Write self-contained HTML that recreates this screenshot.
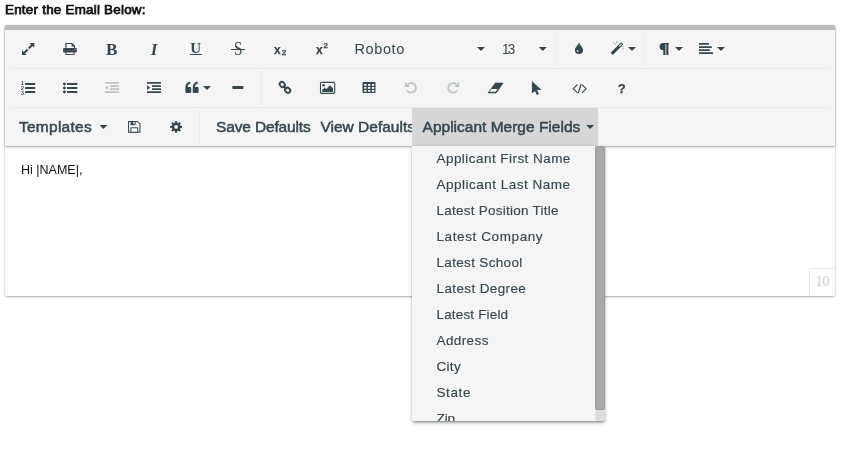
<!DOCTYPE html>
<html><head><meta charset="utf-8"><title>Email editor</title>
<style>
*{box-sizing:border-box}
html,body{margin:0;padding:0;background:#fff;width:841px;height:450px;overflow:hidden}
body{font-family:"Liberation Sans",sans-serif;color:#37474f;position:relative}
.lbl{position:absolute;left:5px;top:1px;font-size:13.4px;color:#111;line-height:17px;white-space:nowrap;letter-spacing:.24px;-webkit-text-stroke:.75px #111}
.box{position:absolute;left:5px;top:25px;width:830px;height:271px;background:#fff;box-shadow:0 1px 3px rgba(0,0,0,.12),0 1px 2px rgba(0,0,0,.24);border-radius:2px}
.tb{position:absolute;left:0;top:0;width:830px;height:121px;background:#f5f5f5;border-top:5px solid #bdbdbd;border-radius:2px 2px 0 0;box-shadow:0 1px 3px rgba(0,0,0,.12),0 1px 2px rgba(0,0,0,.24)}
.hs{position:absolute;left:4px;width:822px;height:1px;background:#ebebeb}
.vs{position:absolute;width:1px;height:34px;background:#ebebeb}
.t{position:absolute;white-space:nowrap;color:#37474f}
.m{font-size:15.5px;line-height:18px;-webkit-text-stroke:.5px #37474f}
.content{position:absolute;left:0;top:121px;width:830px;height:150px;background:#fff;border-radius:0 0 2px 2px}
.cnt{position:absolute;right:0;bottom:0;width:26px;height:28px;border-left:1px solid #ebebeb;border-top:1px solid #ebebeb;font-family:"Liberation Serif",serif;font-size:14px;color:#ccc;text-align:center;line-height:26px}
.dd{position:absolute;left:412px;top:146px;width:193px;height:275px;background:#f5f5f5;overflow:hidden;box-shadow:0 2px 4px rgba(0,0,0,.2),0 1px 2px rgba(0,0,0,.22),0 3px 3px -2px rgba(0,0,0,.22);border-radius:0 0 1px 1px}
.dd div.i{position:absolute;left:24.5px;font-size:13.5px;line-height:26px;height:26px;color:#37474f;-webkit-text-stroke:.15px #37474f;white-space:nowrap}
.sb{position:absolute;right:0;top:0;width:10px;height:275px;background:#dedede;border-left:1px solid #e6e6e6}
.sb b{position:absolute;left:-1px;top:0;width:10px;height:263.5px;background:#a8a8a8;border:1px solid #9c9c9c;border-radius:2px;display:block}
.icons{position:absolute;left:0;top:0;pointer-events:none}
.g{position:absolute;white-space:nowrap;color:#37474f;line-height:1}
.sf{font-family:"Liberation Serif",serif}
#w{position:absolute;left:0;top:0;width:841px;height:450px;will-change:transform}
</style></head><body><div id="w">
<div class="lbl" id="lbl">Enter the Email Below:</div>
<div class="box">
 <div class="content">
  <div class="t" id="hi" style="left:16px;top:17px;font-size:12.5px;color:#111;line-height:15px">Hi |NAME|,</div>
  <div class="cnt">10</div>
 </div>
 <div class="tb">
  <div class="hs" style="top:38px"></div>
  <div class="hs" style="top:77px"></div>
  <div class="t" id="roboto" style="left:349.5px;top:11px;font-size:14.5px;line-height:17px;letter-spacing:.6px">Roboto</div>
  <div class="t" id="n13" style="left:497.3px;top:11px;font-size:14.5px;line-height:17px;letter-spacing:-2px;transform:scaleX(.93);transform-origin:0 0">13</div>
  <div class="vs" style="left:550px;top:2px"></div>
  <div class="vs" style="left:639px;top:2px"></div>
  <div class="vs" style="left:256px;top:41px"></div>
  <div class="vs" style="left:194px;top:80px"></div>
  <div class="t m" id="tpl" style="left:14px;top:88px;letter-spacing:.25px">Templates</div>
  <div class="t m" id="sd" style="left:211px;top:88px;letter-spacing:-.15px">Save Defaults</div>
  <div class="t m" id="vd" style="left:315.5px;top:88px;letter-spacing:0px">View Defaults</div>
  <div style="position:absolute;left:407px;top:78px;width:186px;height:38px;background:#d6d6d6"></div>
  <div class="t m" id="amf" style="left:417.6px;top:88px;letter-spacing:0px">Applicant Merge Fields</div>
 </div>
</div>
<div class="g sf" id="gB" style="left:106px;top:41.3px;font-size:17.2px;font-weight:bold">B</div>
<div class="g sf" id="gI" style="left:150.7px;top:41.3px;font-size:17.2px;font-weight:bold;font-style:italic">I</div>
<div class="g sf" id="gU" style="left:190.3px;top:40.5px;font-size:15px;font-weight:bold">U</div>
<div style="position:absolute;left:190px;top:54px;width:12px;height:1.1px;background:#37474f"></div>
<div class="g sf" id="gS" style="left:233.6px;top:41.1px;font-size:17.8px;transform:scaleX(.85);transform-origin:0 0">S</div>
<div style="position:absolute;left:231.4px;top:48.9px;width:13.9px;height:1.1px;background:#37474f"></div>
<div class="g" id="gx1" style="left:273.6px;top:42.5px;font-size:13.5px;transform:scaleX(.88);transform-origin:0 0;font-weight:bold;-webkit-text-stroke:.25px #37474f">x</div>
<div class="g" id="g21" style="left:281.8px;top:49.3px;font-size:8px;font-weight:bold;-webkit-text-stroke:.25px #37474f">2</div>
<div class="g" id="gx2" style="left:315.8px;top:42.5px;font-size:13.5px;transform:scaleX(.88);transform-origin:0 0;font-weight:bold;-webkit-text-stroke:.25px #37474f">x</div>
<div class="g" id="g22" style="left:323.6px;top:42.4px;font-size:8px;font-weight:bold;-webkit-text-stroke:.25px #37474f">2</div>
<div class="g" id="gq" style="left:617.8px;top:81.5px;font-size:13px;font-weight:bold;-webkit-text-stroke:.25px #37474f">?</div>
<div class="dd">
<div class="i" id="it0" style="top:0px;letter-spacing:0.45px">Applicant First Name</div>
<div class="i" id="it1" style="top:26px;letter-spacing:0.49px">Applicant Last Name</div>
<div class="i" id="it2" style="top:52px;letter-spacing:0.25px">Latest Position Title</div>
<div class="i" id="it3" style="top:78px;letter-spacing:0.6px">Latest Company</div>
<div class="i" id="it4" style="top:104px;letter-spacing:0.33px">Latest School</div>
<div class="i" id="it5" style="top:130px;letter-spacing:0.38px">Latest Degree</div>
<div class="i" id="it6" style="top:156px;letter-spacing:0.16px">Latest Field</div>
<div class="i" id="it7" style="top:182px;letter-spacing:0.4px">Address</div>
<div class="i" id="it8" style="top:208px;letter-spacing:0.3px">City</div>
<div class="i" id="it9" style="top:234px;letter-spacing:0.6px">State</div>
<div class="i" id="it10" style="top:260px;letter-spacing:-0.1px">Zip</div>
 <div class="sb"><b></b></div>
</div>
<svg class="icons" width="841" height="450" viewBox="0 0 841 450" fill="#37474f"><path d="M22 55.1V50.3L23.7 52L26.9 48.8L28.3 50.2L25.1 53.4L26.8 55.1Z M34.3 42.9V47.7L32.6 46L29.4 49.2L28 47.8L31.2 44.6L29.5 42.9Z"/>
<path d="M65.9 48.5V43.5H71.8L74.5 46.2V48.5" fill="#fbfbfb" stroke="#37474f" stroke-width="1.15"/><path d="M71.8 43.5V46.2H74.5Z" stroke="#37474f" stroke-width=".6"/><rect x="63.1" y="47.95" width="13.7" height="4.5" rx="1"/><rect x="63.5" y="50.2" width="12.9" height=".5" fill="#4a5a62"/><circle cx="74.9" cy="49.4" r=".55" fill="#b9c0c4"/><rect x="65.9" y="52" width="8.1" height="2.45" fill="#ffffff" stroke="#37474f" stroke-width="1"/>
<path d="M579 42.4C580.4 45.6 583.1 47.4 583.1 50A4.1 4.1 0 0 1 574.9 50C574.9 47.4 577.6 45.6 579 42.4Z"/><rect x="576.9" y="50" width="1.5" height="1.7" rx=".5" fill="#e8eaeb"/>
<path d="M611.7 53.9L622.2 43.4" stroke="#37474f" stroke-width="3" fill="none"/><path d="M619.3 46.3L621.5 44.1" stroke="#eceeee" stroke-width="1.1" fill="none"/><g fill="#37474f" opacity=".55"><rect x="613" y="42.2" width="1" height="1"/><rect x="616.2" y="41.8" width="1" height="1.4"/><rect x="614.6" y="43.6" width="1.2" height="1"/><rect x="622.6" y="46" width="1" height="1"/><rect x="622.4" y="48.2" width="1.2" height="1"/></g>
<path d="M663.2 42.9H669V44.3H668.4V54.9H666.3V44.3H665.5V54.9H663.3V50.2H663.2A3.65 3.65 0 0 1 663.2 42.9Z"/>
<rect x="699.00" y="43.05" width="10.00" height="1.75" rx=".3"/><rect x="699.00" y="46.20" width="12.80" height="1.75" rx=".3"/><rect x="699.00" y="49.25" width="10.80" height="1.75" rx=".3"/><rect x="699.00" y="52.30" width="14.00" height="1.75" rx=".3"/>
<rect x="25.00" y="83.10" width="10.20" height="1.80" rx=".3"/><rect x="25.00" y="87.10" width="10.20" height="1.80" rx=".3"/><rect x="25.00" y="91.10" width="10.20" height="1.80" rx=".3"/>
<g font-family="Liberation Sans,sans-serif" font-weight="bold" font-size="5.2px"><text x="21" y="84.9">1</text><text x="21" y="89.6">2</text><text x="21" y="94.6">3</text></g>
<rect x="66.90" y="83.10" width="10.40" height="1.80" rx=".3"/><rect x="66.90" y="87.10" width="10.40" height="1.80" rx=".3"/><rect x="66.90" y="91.10" width="10.40" height="1.80" rx=".3"/>
<circle cx="64.4" cy="84" r="1.45"/><circle cx="64.4" cy="88" r="1.45"/><circle cx="64.4" cy="92" r="1.45"/>
<g fill="#bcc3c6"><rect x="105.00" y="82.05" width="14.00" height="1.75" rx=".3"/><rect x="105.00" y="91.25" width="14.00" height="1.75" rx=".3"/><rect x="110.00" y="85.15" width="9.00" height="1.75" rx=".3"/><rect x="110.00" y="88.20" width="9.00" height="1.75" rx=".3"/><path d="M107.9 85.4V89.9L105 87.65Z"/></g>
<rect x="147.00" y="82.05" width="14.00" height="1.75" rx=".3"/><rect x="147.00" y="91.25" width="14.00" height="1.75" rx=".3"/><rect x="152.00" y="85.15" width="9.00" height="1.75" rx=".3"/><rect x="152.00" y="88.20" width="9.00" height="1.75" rx=".3"/><path d="M147.1 85.3V90L150.3 87.65Z"/>
<path d="M185.40 92.2V88C185.35 84.2 187.30 81.9 190.30 81.85L190.30 83.75C188.70 83.85 187.65 85.1 187.60 87.1H190.40a.8 .8 0 0 1 .8 .8V92.2a.8 .8 0 0 1 -.8 .8H186.20a.8 .8 0 0 1 -.8 -.8Z M192.80 92.2V88C192.75 84.2 194.70 81.9 197.70 81.85L197.70 83.75C196.10 83.85 195.05 85.1 195.00 87.1H197.80a.8 .8 0 0 1 .8 .8V92.2a.8 .8 0 0 1 -.8 .8H193.60a.8 .8 0 0 1 -.8 -.8Z"/>
<rect x="232.3" y="85.9" width="11.2" height="3.1" rx="1"/>
<g fill="none" stroke="#37474f" stroke-width="1.85"><rect x="-2.8" y="-2.3" width="5.6" height="4.6" rx="2.3" transform="translate(282.3 84.5) rotate(47)"/><rect x="-2.8" y="-2.3" width="5.6" height="4.6" rx="2.3" transform="translate(287.65 90.2) rotate(47)"/><path d="M283.4 85.7L286.6 89.1"/></g>
<rect x="320.5" y="82.35" width="14.2" height="11" rx="1" fill="none" stroke="#37474f" stroke-width="1.1"/><circle cx="323.6" cy="85.2" r="1.3"/><path d="M322.2 92V90L324.6 87.7L326.2 89.2L330 85.2L333 88.4V92Z"/>
<rect x="362.5" y="81.9" width="13" height="11" rx="1"/><rect x="364.05" y="84.10" width="2.5" height="1.6" rx=".5" fill="#fbfbfb"/><rect x="364.05" y="87.10" width="2.5" height="1.6" rx=".5" fill="#fbfbfb"/><rect x="364.05" y="90.10" width="2.5" height="1.6" rx=".5" fill="#fbfbfb"/><rect x="367.90" y="84.10" width="2.5" height="1.6" rx=".5" fill="#fbfbfb"/><rect x="367.90" y="87.10" width="2.5" height="1.6" rx=".5" fill="#fbfbfb"/><rect x="367.90" y="90.10" width="2.5" height="1.6" rx=".5" fill="#fbfbfb"/><rect x="371.75" y="84.10" width="2.5" height="1.6" rx=".5" fill="#fbfbfb"/><rect x="371.75" y="87.10" width="2.5" height="1.6" rx=".5" fill="#fbfbfb"/><rect x="371.75" y="90.10" width="2.5" height="1.6" rx=".5" fill="#fbfbfb"/>
<g fill="#bcc3c6"><path d="M407.81 84.51A4.80 4.80 0 1 1 407.04 90.30" fill="none" stroke="#bcc3c6" stroke-width="1.8"/><path d="M405 81.9V87H410.1Z"/></g>
<g fill="#bcc3c6"><path d="M456.39 84.51A4.80 4.80 0 1 0 457.16 90.30" fill="none" stroke="#bcc3c6" stroke-width="1.8"/><path d="M459.2 81.9V87H454.1Z"/></g>
<path d="M495.2 82.9H503.2L496.3 93H488Z" stroke="#37474f" stroke-width=".5" stroke-linejoin="round"/><path d="M489.6 91.7L491.5 88.9H497.4L495.5 91.7Z" fill="#fff"/>
<path d="M531.9 81V93.6L534.9 90.9L536.9 95L539 94L537 90.1H541.4Z"/>
<g fill="none" stroke="#37474f" stroke-width="1.15"><path d="M577.4 84.6L573.3 88.7L577.4 92.8"/><path d="M581.2 84.2L578.2 93.2"/><path d="M582 84.6L586.1 88.7L582 92.8"/></g>
<path d="M128.6 121.4H137.5L140 123.9V132.3H128.6Z" fill="none" stroke="#37474f" stroke-width="1.05"/><rect x="130.6" y="121.3" width="5" height="3.9"/><rect x="133.3" y="122" width="1.3" height="2.2" fill="#f5f5f5"/><rect x="130.9" y="127.8" width="6.8" height="4.4" fill="#fff" stroke="#37474f" stroke-width="1"/>
<path fill-rule="evenodd" d="M180.37 125.85 L182.01 125.88 L182.01 127.92 L180.37 127.95 L179.86 129.18 L181.00 130.36 L179.56 131.80 L178.38 130.66 L177.15 131.17 L177.12 132.81 L175.08 132.81 L175.05 131.17 L173.82 130.66 L172.64 131.80 L171.20 130.36 L172.34 129.18 L171.83 127.95 L170.19 127.92 L170.19 125.88 L171.83 125.85 L172.34 124.62 L171.20 123.44 L172.64 122.00 L173.82 123.14 L175.05 122.63 L175.08 120.99 L177.12 120.99 L177.15 122.63 L178.38 123.14 L179.56 122.00 L181.00 123.44 L179.86 124.62Z M174.20 126.90 a1.90 1.90 0 1 0 3.80 0 a1.90 1.90 0 1 0 -3.80 0Z"/><path d="M477.0 47.0h8l-4 4.1z"/><path d="M538.8 47.0h8l-4 4.1z"/><path d="M628.0 47.0h8l-4 4.1z"/><path d="M675.0 47.0h8l-4 4.1z"/><path d="M717.0 47.0h8l-4 4.1z"/><path d="M203.0 86.0h8l-4 4.1z"/><path d="M99.4 125.0h8l-4 4.1z"/><path d="M586.2 125.0h8l-4 4.1z"/></svg>
</div></body></html>
